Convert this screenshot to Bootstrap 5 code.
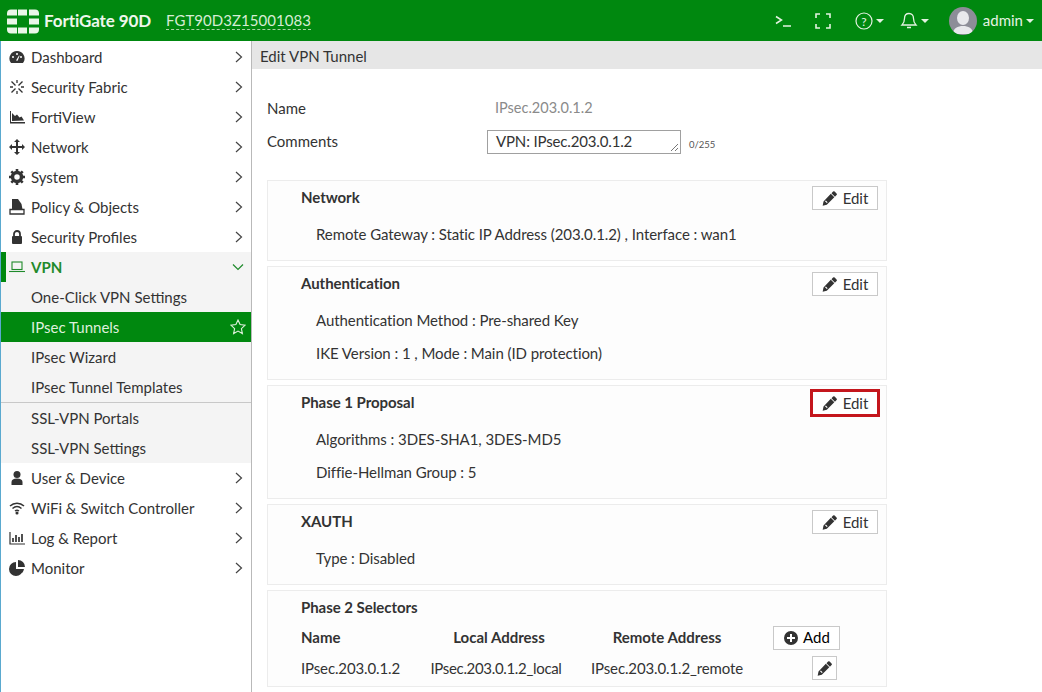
<!DOCTYPE html>
<html>
<head>
    <title>Edit VPN Tunnel</title>
    <link href="https://cdn.jsdelivr.net/npm/bootstrap@5.3.0/dist/css/bootstrap.min.css" rel="stylesheet">
    <style>
        html, body { height: 100%; overflow: hidden; }
        body { font-family: Lato, "Liberation Sans", sans-serif; font-size: 15px; color: #333; background: #fff; }

        .top-bar { height: 41px; background: #00880f; color: #d6ecd4; padding-left: 5px; }
        .brand-name { font-size: 17px; font-weight: 700; color: #eef7ec; margin-left: 3px; width: 122px; letter-spacing: -.1px; }
        .serial-no { font-size: 15px; border-bottom: 1px dashed #a8d4a4; line-height: 17px; margin-top: 1px; letter-spacing: .05px; }
        .top-tools { color: #e4f2e2; }
        .top-ico { display: flex; align-items: center; }
        .caret-down { width: 0; height: 0; border-left: 4px solid transparent; border-right: 4px solid transparent; border-top: 4px solid #e4f2e2; margin-left: 3px; }
        .avatar-pic { width: 28px; height: 28px; border-radius: 50%; background: #8d8d98; overflow: hidden; margin-left: 20px; }
        .user-label { font-size: 15px; margin-left: 6px; }

        .page-body { height: 651px; border-left: 1px solid #5aa9cf; }
        .side-nav { width: 250px; flex: none; }
        .nav-row { height: 30px; padding-left: 8px; padding-right: 7px; color: #333; }
        .nav-row > svg.row-ico { width: 16px; height: 16px; margin-right: 6px; flex: none; }
        .nav-row .row-text { flex: 1 1 auto; }
        .sub-group { background: #f4f4f4; }
        .sub-row { height: 30px; padding-left: 30px; padding-right: 5px; }
        .vpn-row { background: #f4f4f4; color: #1f8a2b; font-weight: 700; border-left: 5px solid #00880f; padding-left: 3px; }
        .sub-row.active-row { background: #00880f; color: #dff0dd; }
        .sub-split { border-top: 1px solid #c8c8c8; }
        .divider-line { width: 1px; background: #b9b9b9; flex: none; }

        .main-area { flex: 1 1 auto; min-width: 0; }
        .crumb-bar { height: 28px; background: #e6e6e6; padding-left: 8px; line-height: 31px; }
        .form-wrap { width: 620px; margin-left: 15px; }
        .field-row { height: 33px; }
        .field-label { width: 228px; flex: none; }
        .name-val { color: #8a8a8a; font-size: 14.5px; margin-top: -2px; }
        .comment-box { width: 194px; height: 24px; border: 1px solid #a0a0a0; padding: 0 8px; font-size: 15px; line-height: 21px; color: #333; position: relative; letter-spacing: -.15px; }
        .grip-mark { position: absolute; right: 1px; bottom: 1px; }
        .char-count { font-size: 9.5px; color: #555; margin-left: 8px; margin-top: 8px; }

        .info-panel { border: 1px solid #ececec; background: #fdfdfd; margin-bottom: 5px; padding: 0 8px 0 33px; }
        .panel-head { height: 33px; padding-top: 5px; }
        .panel-title { font-weight: 700; font-size: 15px; color: #333; letter-spacing: -.05px; }
        .panel-line { padding-left: 15px; height: 33px; line-height: 33px; letter-spacing: -.07px; }
        .edit-btn { height: 24px; width: 66px; border: 1px solid #c9c9c9; background: #fff; font-size: 15px; color: #333; }
        .edit-btn svg { margin-right: 6px; }
        .edit-hilite { outline: 3px solid #c4161c; outline-offset: -1px; border-color: #fff; }
        .sel-head-gap { height: 32px; }
        .sel-grid { display: grid; grid-template-columns: 119px 152px 190px 1fr; grid-template-rows: 28px 34px; }
        .sel-cell { display: flex; align-items: center; letter-spacing: -.13px; }
        .sel-head { font-weight: 700; letter-spacing: 0; }
        .center-cell { justify-content: center; }
        .local-head { padding-left: 6px; }
        .local-cell { letter-spacing: -.33px; }
        .add-btn { height: 24px; width: 67px; border: 1px solid #c9c9c9; background: #fff; margin-left: 11px; margin-top: 1px; }
        .pencil-btn { height: 24px; width: 25px; border: 1px solid #c9c9c9; background: #fff; margin-left: 50px; }
    </style>
</head>
<body>
<svg width="0" height="0" class="d-block position-absolute">
    <symbol id="chev-r" viewBox="0 0 10 12"><path d="M2 1l5.500 5L2 11" fill="none" stroke="#444" stroke-width="1.200"/></symbol>
    <symbol id="pencil" viewBox="0 0 16 16"><path d="M11.800 .6a1.200 1.200 0 0 1 1.700 0l2 2a1.200 1.200 0 0 1 0 1.700l-1.700 1.700-3.700-3.700z" fill="#333"/><path d="M9.400 3l3.700 3.700-8 8-4.400 1 .9-4.500zM3.200 11l1.900 1.900.9-.9L4.100 10z" fill="#333" fill-rule="evenodd"/></symbol>
</svg>

<header class="top-bar d-flex align-items-center">
    <svg width="36" height="28" viewBox="0 0 36 28" fill="#eaf6e8">
        <path d="M2 8.500v-2a4 4 0 0 1 4-4h6v6zM13 2.500h9v6h-9zM24 2.500h6a4 4 0 0 1 4 4v2H24z"/>
        <rect x="2" y="11.500" width="10" height="6"/><rect x="24" y="11.500" width="10" height="6"/>
        <path d="M2 20.500h10v6H6a4 4 0 0 1-4-4zM13 20.500h9v6h-9zM24 20.500h10v2a4 4 0 0 1-4 4h-6z"/>
    </svg>
    <div class="brand-name">FortiGate 90D</div>
    <div class="serial-no">FGT90D3Z15001083</div>
    <div class="top-tools d-flex align-items-center ms-auto">
        <svg class="me-4" width="16" height="14" viewBox="0 0 16 14" fill="none" stroke="#e4f2e2" stroke-width="1.500"><path d="M1 2.500l5.500 3.500L1 9.500M8 12h8"/></svg>
        <svg width="16" height="16" viewBox="0 0 16 16" fill="none" stroke="#e4f2e2" stroke-width="1.600"><path d="M1 5V1h4M11 1h4v4M15 11v4h-4M5 15H1v-4"/></svg>
        <div class="top-ico ms-4">
            <svg width="18" height="18" viewBox="0 0 18 18"><circle cx="9" cy="9" r="8" fill="none" stroke="#e4f2e2" stroke-width="1.200"/><text x="9" y="13.500" text-anchor="middle" font-size="12" fill="#e4f2e2" font-family="Lato">?</text></svg>
            <span class="caret-down"></span>
        </div>
        <div class="top-ico ms-3">
            <svg width="18" height="18" viewBox="0 0 18 18" fill="none" stroke="#e4f2e2" stroke-width="1.300"><path d="M9 1.500c-3 0-4.500 2.200-4.500 5 0 3.500-1 5-2.500 6.500h14c-1.500-1.500-2.500-3-2.500-6.500 0-2.800-1.500-5-4.500-5zM7 15.500h4"/></svg>
            <span class="caret-down"></span>
        </div>
        <div class="avatar-pic">
            <svg width="28" height="28" viewBox="0 0 28 28" fill="#e8e8ec"><ellipse cx="14" cy="11" rx="6" ry="7"/><path d="M4 27c0-6 5-8 10-8s10 2 10 8z"/></svg>
        </div>
        <span class="user-label">admin</span>
        <span class="caret-down me-2"></span>
    </div>
</header>

<div class="page-body d-flex">
    <nav class="side-nav pt-1">
        <div class="nav-row d-flex align-items-center" style="margin-top:-3px">
            <svg class="row-ico" viewBox="0 0 16 16"><path d="M8 2a7.500 7.500 0 0 0-6.500 11.300l.7.700h11.600l.7-.7A7.500 7.500 0 0 0 8 2z" fill="#333"/><circle cx="8" cy="5" r="1" fill="#fff"/><circle cx="4" cy="8" r="1" fill="#fff"/><circle cx="12" cy="8" r="1" fill="#fff"/><path d="M7 11.500l3-5 .6.300-2 5z" fill="#fff"/></svg>
            <span class="row-text">Dashboard</span><svg width="10" height="12"><use href="#chev-r"/></svg>
        </div>
        <div class="nav-row d-flex align-items-center">
            <svg class="row-ico" viewBox="0 0 16 16" fill="none" stroke="#333" stroke-width="1.300"><path d="M2.500 2.500l4 4M13.500 2.500l-4 4M2.500 13.500l4-4M13.500 13.500l-4-4M8 1v3M8 12v3M1 8h3M12 8h3"/></svg>
            <span class="row-text">Security Fabric</span><svg width="10" height="12"><use href="#chev-r"/></svg>
        </div>
        <div class="nav-row d-flex align-items-center">
            <svg class="row-ico" viewBox="0 0 16 16" fill="#333"><path d="M1 2h1v11h14v1.500H1z"/><path d="M3 12V4l3 3 2-1.500 2.500 3 2-1 2.500 4z"/></svg>
            <span class="row-text">FortiView</span><svg width="10" height="12"><use href="#chev-r"/></svg>
        </div>
        <div class="nav-row d-flex align-items-center">
            <svg class="row-ico" viewBox="0 0 16 16" fill="#333"><path d="M8 0l3 3H9v4h4V5l3 3-3 3V9H9v4h2l-3 3-3-3h2V9H3v2L0 8l3-3v2h4V3H5z"/></svg>
            <span class="row-text">Network</span><svg width="10" height="12"><use href="#chev-r"/></svg>
        </div>
        <div class="nav-row d-flex align-items-center">
            <svg class="row-ico" viewBox="0 0 16 16"><circle cx="8" cy="8" r="4.500" fill="none" stroke="#333" stroke-width="3.500"/><path d="M8 0v3M8 13v3M0 8h3M13 8h3M2.300 2.300l2 2M11.700 11.700l2 2M13.700 2.300l-2 2M4.300 11.700l-2 2" stroke="#333" stroke-width="2.600"/></svg>
            <span class="row-text">System</span><svg width="10" height="12"><use href="#chev-r"/></svg>
        </div>
        <div class="nav-row d-flex align-items-center">
            <svg class="row-ico" viewBox="0 0 16 16"><path d="M3 0h6l3.500 5 1 5.500H3z" fill="#333"/><path d="M1 10.500h14V15H1z" fill="#fff" stroke="#333" stroke-width="1.300"/></svg>
            <span class="row-text">Policy &amp; Objects</span><svg width="10" height="12"><use href="#chev-r"/></svg>
        </div>
        <div class="nav-row d-flex align-items-center">
            <svg class="row-ico" viewBox="0 0 16 16"><path d="M5 7V5a3 3 0 0 1 6 0v2" fill="none" stroke="#333" stroke-width="1.800"/><rect x="3" y="7" width="10" height="8" rx="1" fill="#333"/></svg>
            <span class="row-text">Security Profiles</span><svg width="10" height="12"><use href="#chev-r"/></svg>
        </div>
        <div class="sub-group">
            <div class="nav-row vpn-row d-flex align-items-center">
                <svg class="row-ico" viewBox="0 0 16 16" fill="none" stroke="#1f8a2b" stroke-width="1.100"><rect x="3" y="3" width="10" height="7.500"/><path d="M0 12.500h16"/></svg>
                <span class="row-text">VPN</span>
                <svg width="12" height="8" viewBox="0 0 12 8" fill="none" stroke="#1f8a2b" stroke-width="1.200"><path d="M1 1.500l5 5 5-5"/></svg>
            </div>
            <div class="sub-row d-flex align-items-center">One-Click VPN Settings</div>
            <div class="sub-row active-row d-flex align-items-center justify-content-between">
                <span>IPsec Tunnels</span>
                <svg width="16" height="16" viewBox="0 0 16 16" fill="none" stroke="#dff0dd" stroke-width="1.100"><path d="M8 1l2.100 4.600 5 .6-3.700 3.400 1 5L8 12.100l-4.400 2.500 1-5L.9 6.200l5-.6z"/></svg>
            </div>
            <div class="sub-row d-flex align-items-center">IPsec Wizard</div>
            <div class="sub-row d-flex align-items-center">IPsec Tunnel Templates</div>
            <div class="sub-row sub-split d-flex align-items-center" style="height:31px">SSL-VPN Portals</div>
            <div class="sub-row d-flex align-items-center">SSL-VPN Settings</div>
        </div>
        <div class="nav-row d-flex align-items-center">
            <svg class="row-ico" viewBox="0 0 16 16" fill="#333"><circle cx="8" cy="4.500" r="3.500"/><path d="M2.500 15v-3c0-2 2-3.500 5.500-3.500s5.500 1.500 5.500 3.500v3z"/></svg>
            <span class="row-text">User &amp; Device</span><svg width="10" height="12"><use href="#chev-r"/></svg>
        </div>
        <div class="nav-row d-flex align-items-center">
            <svg class="row-ico" viewBox="0 0 16 16" fill="none" stroke="#333" stroke-width="1.500"><path d="M1 6c4-3.800 10-3.800 14 0M3.500 8.500c2.700-2.300 6.300-2.300 9 0M6 11c1.200-.9 2.800-.9 4 0"/><circle cx="8" cy="13" r=".8" fill="#333"/></svg>
            <span class="row-text">WiFi &amp; Switch Controller</span><svg width="10" height="12"><use href="#chev-r"/></svg>
        </div>
        <div class="nav-row d-flex align-items-center">
            <svg class="row-ico" viewBox="0 0 16 16" fill="none" stroke="#333" stroke-width="1.200"><path d="M1 2v12h15"/><path d="M4 12V8M7 12V5M10 12V7M13 12V4" stroke-width="1.700"/></svg>
            <span class="row-text">Log &amp; Report</span><svg width="10" height="12"><use href="#chev-r"/></svg>
        </div>
        <div class="nav-row d-flex align-items-center">
            <svg class="row-ico" viewBox="0 0 16 16" fill="#333"><path d="M7 2a7 7 0 1 0 7 7H7z"/><path d="M9 0a7 7 0 0 1 7 7H9z"/><path d="M9.500 9H15a7 7 0 0 1-2 4z"/></svg>
            <span class="row-text">Monitor</span><svg width="10" height="12"><use href="#chev-r"/></svg>
        </div>
    </nav>
    <div class="divider-line"></div>

    <main class="main-area">
        <div class="crumb-bar">Edit VPN Tunnel</div>
        <div class="form-wrap">
            <div class="field-row d-flex align-items-center" style="margin-top:23px">
                <div class="field-label">Name</div><div class="name-val">IPsec.203.0.1.2</div>
            </div>
            <div class="field-row d-flex align-items-center" style="margin-bottom:22px">
                <div class="field-label" style="width:220px">Comments</div>
                <div class="comment-box">VPN: IPsec.203.0.1.2
                    <svg class="grip-mark" width="9" height="9" viewBox="0 0 9 9" stroke="#777" fill="none"><path d="M8 1L1 8M8 5L5 8"/></svg>
                </div>
                <div class="char-count">0/255</div>
            </div>

            <section class="info-panel" style="height:81px">
                <div class="panel-head d-flex justify-content-between">
                    <span class="panel-title">Network</span>
                    <button class="edit-btn d-flex align-items-center justify-content-center p-0" type="button"><svg width="15" height="15"><use href="#pencil"/></svg>Edit</button>
                </div>
                <div class="panel-line" style="margin-top:4px">Remote Gateway : Static IP Address (203.0.1.2) , Interface : wan1</div>
            </section>
            <section class="info-panel" style="height:114px">
                <div class="panel-head d-flex justify-content-between">
                    <span class="panel-title">Authentication</span>
                    <button class="edit-btn d-flex align-items-center justify-content-center p-0" type="button"><svg width="15" height="15"><use href="#pencil"/></svg>Edit</button>
                </div>
                <div class="panel-line" style="margin-top:4px">Authentication Method : Pre-shared Key</div>
                <div class="panel-line">IKE Version : 1 , Mode : Main (ID protection)</div>
            </section>
            <section class="info-panel" style="height:114px">
                <div class="panel-head d-flex justify-content-between">
                    <span class="panel-title">Phase 1 Proposal</span>
                    <button class="edit-btn edit-hilite d-flex align-items-center justify-content-center p-0" type="button"><svg width="15" height="15"><use href="#pencil"/></svg>Edit</button>
                </div>
                <div class="panel-line" style="margin-top:4px">Algorithms : 3DES-SHA1, 3DES-MD5</div>
                <div class="panel-line">Diffie-Hellman Group : 5</div>
            </section>
            <section class="info-panel" style="height:81px">
                <div class="panel-head d-flex justify-content-between">
                    <span class="panel-title">XAUTH</span>
                    <button class="edit-btn d-flex align-items-center justify-content-center p-0" type="button"><svg width="15" height="15"><use href="#pencil"/></svg>Edit</button>
                </div>
                <div class="panel-line" style="margin-top:4px">Type : Disabled</div>
            </section>
            <section class="info-panel" style="height:97px">
                <div class="panel-head sel-head-gap"><span class="panel-title d-block">Phase 2 Selectors</span></div>
                <div class="sel-grid">
                    <div class="sel-cell sel-head">Name</div>
                    <div class="sel-cell sel-head center-cell local-head">Local Address</div>
                    <div class="sel-cell sel-head center-cell">Remote Address</div>
                    <div class="sel-cell"><button class="add-btn d-flex align-items-center justify-content-center p-0" type="button">
                        <svg class="me-1" width="16" height="16" viewBox="0 0 16 16"><circle cx="8" cy="8" r="7" fill="#333"/><path d="M8 4v8M4 8h8" stroke="#fff" stroke-width="2"/></svg>Add</button></div>
                    <div class="sel-cell">IPsec.203.0.1.2</div>
                    <div class="sel-cell center-cell local-cell">IPsec.203.0.1.2_local</div>
                    <div class="sel-cell center-cell">IPsec.203.0.1.2_remote</div>
                    <div class="sel-cell"><button class="pencil-btn d-flex align-items-center justify-content-center p-0" type="button"><svg width="15" height="15"><use href="#pencil"/></svg></button></div>
                </div>
            </section>
        </div>
    </main>
</div>
<script src="https://cdn.jsdelivr.net/npm/bootstrap@5.3.0/dist/js/bootstrap.bundle.min.js"></script>
</body>
</html>
